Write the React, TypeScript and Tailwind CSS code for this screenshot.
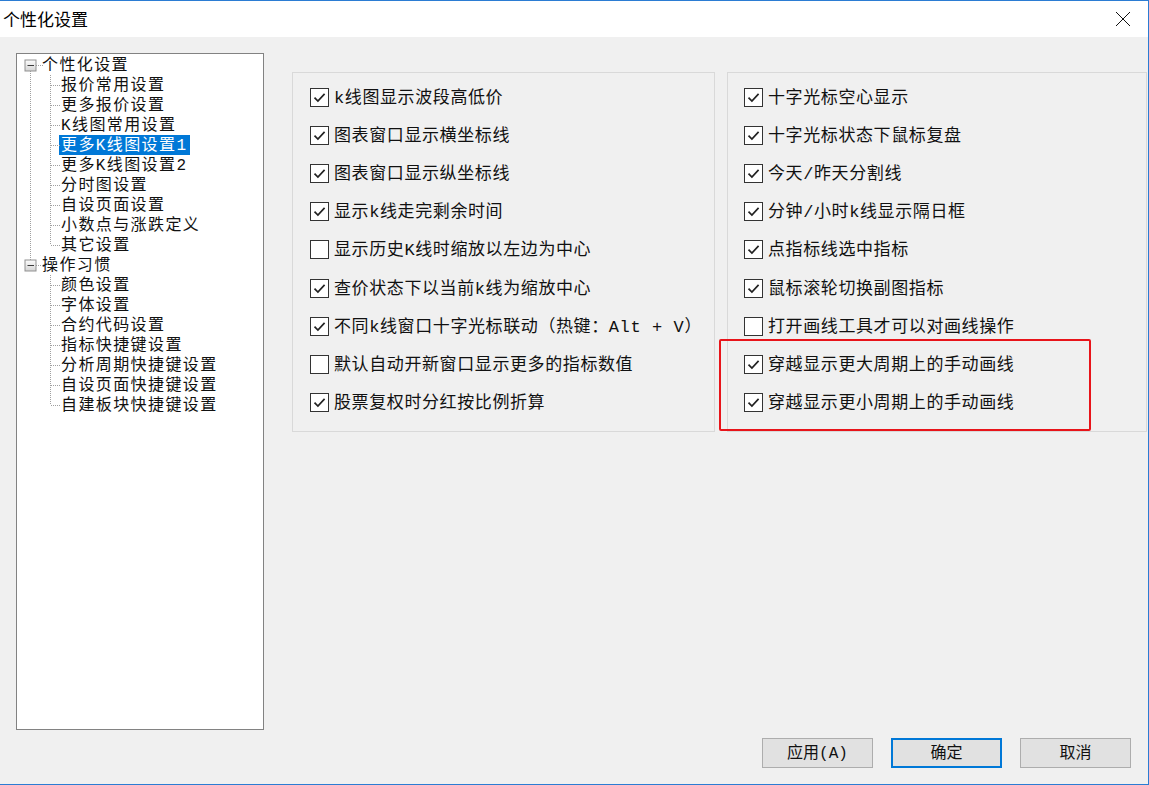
import React from 'react';

const FONT = "font-['Liberation_Mono','Noto_Sans_CJK_SC',monospace]";

const treeGroups = [
  {
    title: '个性化设置',
    items: ['报价常用设置', '更多报价设置', 'K线图常用设置', '更多K线图设置1', '更多K线图设置2', '分时图设置', '自设页面设置', '小数点与涨跌定义', '其它设置'],
  },
  {
    title: '操作习惯',
    items: ['颜色设置', '字体设置', '合约代码设置', '指标快捷键设置', '分析周期快捷键设置', '自设页面快捷键设置', '自建板块快捷键设置'],
  },
];

const leftOptions = [
  { label: 'k线图显示波段高低价', checked: true },
  { label: '图表窗口显示横坐标线', checked: true },
  { label: '图表窗口显示纵坐标线', checked: true },
  { label: '显示k线走完剩余时间', checked: true },
  { label: '显示历史K线时缩放以左边为中心', checked: false },
  { label: '查价状态下以当前k线为缩放中心', checked: true },
  { label: '不同k线窗口十字光标联动（热键：Alt + V）', checked: true },
  { label: '默认自动开新窗口显示更多的指标数值', checked: false },
  { label: '股票复权时分红按比例折算', checked: true },
];

const rightOptions = [
  { label: '十字光标空心显示', checked: true },
  { label: '十字光标状态下鼠标复盘', checked: true },
  { label: '今天/昨天分割线', checked: true },
  { label: '分钟/小时k线显示隔日框', checked: true },
  { label: '点指标线选中指标', checked: true },
  { label: '鼠标滚轮切换副图指标', checked: true },
  { label: '打开画线工具才可以对画线操作', checked: false },
  { label: '穿越显示更大周期上的手动画线', checked: true },
  { label: '穿越显示更小周期上的手动画线', checked: true },
];

const MinusBox: React.FC<{ cx: number; cy: number }> = ({ cx, cy }) => (
  <g>
    <defs>
      <linearGradient id="mb" x1="0" y1="0" x2="0" y2="1">
        <stop offset="0" stopColor="#fdfdfd" />
        <stop offset="1" stopColor="#d4d4d4" />
      </linearGradient>
    </defs>
    <rect x={cx - 5.5} y={cy - 5.5} width={11} height={11} fill="url(#mb)" stroke="#919191" />
    <line x1={cx - 3} y1={cy} x2={cx + 3.5} y2={cy} stroke="#3c3c3c" />
  </g>
);

// dotted connector lines for the tree, drawn over the white list
const TreeLines: React.FC = () => {
  const dots = { stroke: '#a0a0a0', strokeDasharray: '1 1', strokeWidth: 1 };
  const rows1 = treeGroups[0].items.map((_, i) => 31 + i * 20);
  const rows2 = treeGroups[1].items.map((_, i) => 231 + i * 20);
  return (
    <svg className="absolute left-0 top-0 pointer-events-none" width={246} height={420}>
      <line x1={13.5} y1={17} x2={13.5} y2={206} {...dots} />
      <line x1={19} y1={11.5} x2={26} y2={11.5} {...dots} />
      <line x1={19} y1={211.5} x2={26} y2={211.5} {...dots} />
      <line x1={33.5} y1={21} x2={33.5} y2={191} {...dots} />
      <line x1={33.5} y1={221} x2={33.5} y2={351} {...dots} />
      {[...rows1, ...rows2].map((y) => (
        <line key={y} x1={34} y1={y + 0.5} x2={43} y2={y + 0.5} {...dots} />
      ))}
      <MinusBox cx={13.5} cy={11.5} />
      <MinusBox cx={13.5} cy={211.5} />
    </svg>
  );
};

const Tree: React.FC = () => (
  <div className="relative w-[248px] h-[677px] border border-[#828282] bg-white shrink-0">
    <TreeLines />
    <div className={`${FONT} text-[16px] tracking-[1.4px] text-[#111] pt-[1px]`}>
      {treeGroups.map((g) => (
        <div key={g.title}>
          <div className="h-[20px] flex items-center pl-[25px] leading-none">
            <span className="pt-[2px]">{g.title}</span>
          </div>
          {g.items.map((item) => (
            <div key={item} className="h-[20px] flex items-center pl-[42px] leading-none">
              <span
                className={
                  item === '更多K线图设置1'
                    ? 'bg-[#0078d7] text-white h-[20px] flex items-center pt-[2px] pl-[2px] pr-[3px]'
                    : 'pt-[2px] pl-[2px] pr-[3px]'
                }
              >
                {item}
              </span>
            </div>
          ))}
        </div>
      ))}
    </div>
  </div>
);

const Checkbox: React.FC<{ checked: boolean }> = ({ checked }) => (
  <span className="w-[19px] h-[19px] border border-[#333] bg-white flex items-center justify-center shrink-0">
    {checked && (
      <svg width="15" height="15" viewBox="0 0 15 15">
        <polyline points="2.5,7.6 5.9,11 12.6,3.8" fill="none" stroke="#222" strokeWidth="1.7" />
      </svg>
    )}
  </span>
);

const OptionGroup: React.FC<{ options: { label: string; checked: boolean }[]; width: string; pad: string }> = ({
  options,
  width,
  pad,
}) => (
  <div className={`${width} h-[360px] border border-[#d9d9d9] pt-[5px] ${pad}`}>
    {options.map((o) => (
      <div key={o.label} className="h-[38.2px] flex items-center gap-[5px]">
        <Checkbox checked={o.checked} />
        <span className={`${FONT} text-[17px] tracking-[0.6px] text-[#111] leading-none whitespace-nowrap pt-[2px]`}>
          {o.label}
        </span>
      </div>
    ))}
  </div>
);

const Button: React.FC<{ label: string; primary?: boolean }> = ({ label, primary }) => (
  <button
    className={`${FONT} w-[111px] h-[30px] bg-[#e1e1e1] text-[16px] text-[#111] flex items-center justify-center pt-[1px] ${
      primary ? 'border-2 border-[#0078d7]' : 'border border-[#adadad]'
    }`}
  >
    {label}
  </button>
);

export default function App() {
  return (
    <div className="relative w-[1149px] h-[785px] flex flex-col border-t border-r border-b border-[#2b7cd3] overflow-hidden">
      <div className="h-[36px] bg-white flex items-center justify-between pl-[3px] pr-[17px] shrink-0">
        <span className="font-['Noto_Sans_CJK_SC',sans-serif] text-[17px] text-black">个性化设置</span>
        <svg width="16" height="16" viewBox="0 0 16 16">
          <line x1="1" y1="1" x2="15" y2="15" stroke="#111" strokeWidth="1" />
          <line x1="15" y1="1" x2="1" y2="15" stroke="#111" strokeWidth="1" />
        </svg>
      </div>

      <div className="flex-1 bg-[#f0f0f0] flex flex-col">
        <div className="flex pt-[16px] pl-[16px]">
          <Tree />
          <div className="flex gap-[12px] ml-[28px] mt-[19px]">
            <OptionGroup options={leftOptions} width="w-[423px]" pad="pl-[17px]" />
            <OptionGroup options={rightOptions} width="w-[420px]" pad="pl-[16px]" />
          </div>
        </div>
        <div className="flex justify-end gap-[18px] pr-[17px] mt-[8px]">
          <Button label="应用(A)" />
          <Button label="确定" primary />
          <Button label="取消" />
        </div>
      </div>

      {/* red annotation box */}
      <div className="absolute left-[719px] top-[338px] w-[372px] h-[92px] border-2 border-[#e8141a] rounded-[2px] pointer-events-none" />
    </div>
  );
}
